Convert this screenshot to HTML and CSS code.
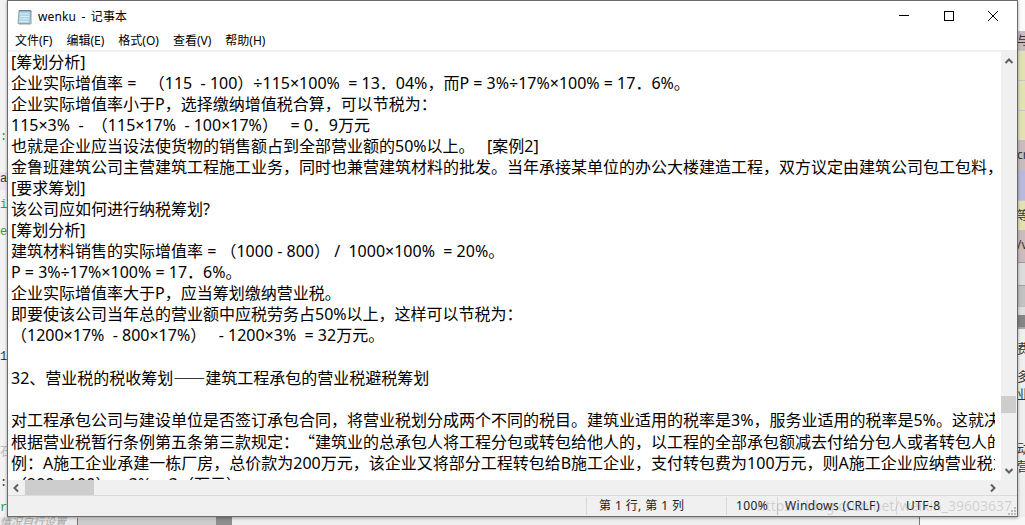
FILE: index.html
```html
<!DOCTYPE html>
<html lang="zh-CN">
<head>
<meta charset="utf-8">
<title>wenku - 记事本</title>
<link rel="stylesheet" href="styles.css">
</head>
<body>
<div class="desktop">
  <div class="left-strip">
    <span class="code green c1">:f</span>
    <span class="band"></span>
    <span class="code c2">aa</span>
    <span class="code green c3">in</span>
    <span class="code green c4">e8</span>
    <span class="code c5">11</span>
    <span class="code faint c6">石</span>
    <span class="code c7">:)</span>
    <span class="code green c8">ro</span>
  </div>
  <div class="right-strip">
    <div class="blk white"></div>
    <div class="blk pink h19"><span>与宝</span></div>
    <div class="blk yellow h30"></div>
    <div class="blk yellow h30"></div>
    <div class="blk yellow h30"></div>
    <div class="blk pink h30"><span>cr</span></div>
    <div class="blk lav h30"></div>
    <div class="blk yellow h30"><span>等</span></div>
    <div class="blk pink h32"><span>/v</span></div>
    <div class="blk g1"></div>
    <div class="blk g2"></div>
    <div class="blk g3"></div>
    <div class="blk g4"></div>
    <div class="blk g5">
      <span class="r1">费</span>
      <span class="r2">多</span>
      <span class="r3">业</span>
      <span class="r4">动</span>
      <span class="r5">营</span>
    </div>
  </div>
  <div class="bottom-strip">
    <span class="b1">情况自行设置</span>
    <span class="b2"></span>
    <span class="b3"></span>
    <span class="b4"></span>
  </div>
  <div class="win">
    <header class="titlebar">
      <svg class="appicon" width="16" height="17" viewBox="0 0 16 17">
        <path d="M2 2.500h12l-1 13H1z" fill="#a9d3e6" stroke="#7f9aa8" stroke-width=".8"/>
        <path d="M14 3v13H2" fill="none" stroke="#9b9b9b"/>
        <path d="M3 6h9M3 8.500h9M2.700 11h9M2.500 13.500h9" stroke="#d8eef7" stroke-width="1"/>
        <path d="M3 2v1.500M5 2v1.500M7 2v1.500M9 2v1.500M11 2v1.500M13 2v1.500" stroke="#50606a" stroke-width="1"/>
      </svg>
      <span class="title">wenku - 记事本</span>
      <div class="controls">
        <button class="ctl" aria-label="最小化"><svg width="12" height="12" viewBox="0 0 12 12"><path d="M1 5.500h10" stroke="#000" fill="none"/></svg></button>
        <button class="ctl" aria-label="最大化"><svg width="12" height="12" viewBox="0 0 12 12"><rect x="1.500" y="1.500" width="9" height="9" stroke="#000" fill="none"/></svg></button>
        <button class="ctl close" aria-label="关闭"><svg width="12" height="12" viewBox="0 0 12 12"><path d="M1 1l10 10M11 1L1 11" stroke="#000" fill="none"/></svg></button>
      </div>
    </header>
    <nav class="menu"><span>文件(F)</span><span>编辑(E)</span><span>格式(O)</span><span>查看(V)</span><span>帮助(H)</span></nav>
    <div class="client">
      <div class="row-main">
        <div class="editor"><pre class="text">[筹划分析]
企业实际增值率 =   （115  - 100）÷115×100%  = 13．04%，而P = 3%÷17%×100% = 17．6%。
企业实际增值率小于P，选择缴纳增值税合算，可以节税为：
115×3%  -  （115×17%  - 100×17%）   = 0．9万元
也就是企业应当设法使货物的销售额占到全部营业额的50%以上。   [案例2]
金鲁班建筑公司主营建筑工程施工业务，同时也兼营建筑材料的批发。当年承接某单位的办公大楼建造工程，双方议定由建筑公司包工包料，
[要求筹划]
该公司应如何进行纳税筹划?
[筹划分析]
建筑材料销售的实际增值率 = （1000 - 800） /  1000×100%  = 20%。
P = 3%÷17%×100% = 17．6%。
企业实际增值率大于P，应当筹划缴纳营业税。
即要使该公司当年总的营业额中应税劳务占50%以上，这样可以节税为：
（1200×17%  - 800×17%）   - 1200×3%  = 32万元。

32、营业税的税收筹划<span class="cjk">——</span>建筑工程承包的营业税避税筹划

对工程承包公司与建设单位是否签订承包合同，将营业税划分成两个不同的税目。建筑业适用的税率是3%，服务业适用的税率是5%。这就决定了
根据营业税暂行条例第五条第三款规定：<span class="cjk">“</span>建筑业的总承包人将工程分包或转包给他人的，以工程的全部承包额减去付给分包人或者转包人的价款
例：A施工企业承建一栋厂房，总价款为200万元，该企业又将部分工程转包给B施工企业，支付转包费为100万元，则A施工企业应纳营业税为：
（200 - 100） × 3% = 3（万元）</pre></div>
        <div class="vbar">
          <svg class="chev" width="10" height="8" viewBox="0 0 10 8"><path d="M1.500 6L5 2.500 8.500 6" fill="none" stroke="#606060" stroke-width="2"/></svg>
          <div class="vtrack"><div class="vthumb"></div></div>
          <svg class="chev" width="10" height="8" viewBox="0 0 10 8"><path d="M1.500 2L5 5.500 8.500 2" fill="none" stroke="#606060" stroke-width="2"/></svg>
        </div>
      </div>
      <div class="hbar">
        <svg class="hchev" width="8" height="10" viewBox="0 0 8 10"><path d="M6 1.500L2.500 5 6 8.500" fill="none" stroke="#606060" stroke-width="2"/></svg>
        <div class="hthumb"></div>
        <svg class="hchev right" width="8" height="10" viewBox="0 0 8 10"><path d="M2 1.500L5.500 5 2 8.500" fill="none" stroke="#606060" stroke-width="2"/></svg>
      </div>
    </div>
    <footer class="status">
      <span class="cell s-pos">第 1 行, 第 1 列</span>
      <span class="cell s-zoom">100%</span>
      <span class="cell s-eol">Windows (CRLF)</span>
      <span class="cell s-enc">UTF-8</span>
      <svg class="grip" width="8" height="8" viewBox="0 0 8 8"><path d="M6 0h2v2H6zM3 3h2v2H3zM6 3h2v2H6zM0 6h2v2H0zM3 6h2v2H3zM6 6h2v2H6z" fill="#bdbdbd"/></svg>
    </footer>
  </div>
  <span class="watermark">https://blog.csdn.net/weixin_39603637</span>
</div>
</body>
</html>
```
FILE: styles.css
```css
html,body{margin:0;padding:0;overflow:hidden}
body{width:1025px;height:525px;background:#fff;font-family:"Noto Sans","Noto Sans CJK SC",sans-serif}
.desktop{position:relative;width:1025px;height:525px;overflow:hidden;background:#f2f2f2}

.left-strip{position:absolute;left:0;top:0;width:8px;height:517px;background:#f3f3f3;overflow:hidden}
.code{position:absolute;left:0;font:12px/14px "Liberation Mono",monospace;color:#333}
.green{color:#2aa02a}
.faint{color:#bbb}
.band{position:absolute;left:0;top:172px;width:8px;height:18px;background:#efe6ef}
.c1{top:130px}.c2{top:172px}.c3{top:198px}.c4{top:225px}.c5{top:350px}.c6{top:446px}.c7{top:476px}.c8{top:501px}

.right-strip{position:absolute;left:1018px;top:0;width:7px;height:517px;display:flex;flex-direction:column;overflow:hidden;background:#f2f2f2}
.blk{flex:none;font-size:12px;line-height:14px;color:#333;white-space:nowrap;overflow:hidden;box-sizing:border-box}
.blk span{display:block;margin-left:-1px}
.white{height:31px;background:#fbfbfb}
.pink{background:#cbbcbc}
.yellow{background:#e1e1b4;border-top:1px solid #c7c7c7}
.lav{background:#b9b9de}
.h19{height:19px;padding-top:3px}
.h30{height:30px;padding-top:8px}
.h32{height:32px;padding-top:8px}
.g1{height:23px;background:#dcdcdc;border-top:1px solid #9a9a9a}
.g2{height:22px;background:#c2c2c2;border-top:1px solid #a0a0a0}
.g3{height:8px;background:#dedede}
.g4{height:12px;background:#858585}
.g5{flex:1;background:#efefef;border-top:2px solid #a8a8a8;padding-top:12px;font-size:13px}
.r1{height:28px}.r2{height:18px}.r3{height:54px}.r4{height:18px}.r5{height:14px}

.bottom-strip{position:absolute;left:0;top:517px;width:1025px;height:8px;display:flex;background:#e9e9e9;overflow:hidden}
.b1{width:77px;flex:none;font-size:11px;line-height:9px;font-style:italic;color:#a8a8a8;white-space:nowrap;overflow:hidden}
.b2{width:139px;flex:none;background:#cbcbcb;border-left:1px solid #777;box-sizing:border-box;border-top:2px solid #e2e2e2}
.b3{width:16px;flex:none;background:#8e8e8e}
.b4{flex:1;background:linear-gradient(to right,#ededed 0,#ededed 687px,#777 687px,#777 688px,#f7f7f7 688px)}

.win{position:absolute;left:7px;top:0;width:1011px;height:517px;background:#fff;box-sizing:border-box;border:1px solid #6a6a6a;display:flex;flex-direction:column;box-shadow:0 1px 3px rgba(0,0,0,.35)}
.titlebar{flex:none;height:30px;display:flex;align-items:center;padding-left:9px;font-size:12px;color:#000}
.appicon{flex:none;margin-right:5px}
.title{letter-spacing:.15px;word-spacing:2px}
.controls{margin-left:auto;display:flex;align-items:center}
.ctl{width:45px;height:30px;padding:0;border:0;background:none;display:flex;align-items:center;justify-content:center}
.close{margin-right:1px;transform:translateX(-1px)}
.menu{flex:none;height:19px;display:flex;gap:14px;font-size:12px;line-height:19px;padding-left:7px;color:#000;border-bottom:2px solid #f0f0f0}
.client{flex:1;min-height:0;display:flex;flex-direction:column;background:#f0f0f0}
.row-main{flex:1;min-height:0;display:flex}
.editor{flex:1;min-width:0;background:#fff;overflow:hidden;padding-right:6px}
.text{margin:0;font:16px/21px "Noto Sans","Noto Sans CJK SC",sans-serif;color:#000;padding-left:3px;white-space:pre;overflow:hidden;text-spacing-trim:space-all}
.cjk{font-family:"Noto Sans CJK SC",sans-serif}
.vbar{flex:none;width:16px;display:flex;flex-direction:column;align-items:center;padding:5px 0;box-sizing:border-box;background:#f0f0f0}
.chev{flex:none}
.vtrack{flex:1;width:100%;padding-top:331px;box-sizing:border-box}
.vthumb{height:17px;width:15px;background:#cdcdcd}
.hbar{flex:none;height:16px;display:flex;align-items:center;background:#f0f0f0;box-sizing:border-box;border-bottom:1px solid #dadada}
.hchev{flex:none;margin-left:4px}
.hthumb{flex:none;width:69px;height:15px;margin-left:5px;background:#cdcdcd;align-self:flex-start}
.hchev.right{margin-left:auto;margin-right:20px}
.status{flex:none;height:20px;display:flex;align-items:center;background:#f0f0f0;font-size:12px;color:#222;letter-spacing:.4px;position:relative}
.cell{height:18px;line-height:18px;box-sizing:border-box;padding-left:12px;border-left:1px solid #dadada;white-space:nowrap}
.s-pos{margin-left:578px;width:140px}
.s-zoom{width:51px;padding-left:9px}
.s-eol{width:119px;padding-left:7px}
.s-enc{padding-left:9px}
.grip{position:absolute;right:1px;bottom:1px}
.watermark{position:absolute;left:757px;top:497px;font-size:14px;line-height:18px;color:rgba(125,125,125,.28);white-space:nowrap}
```
